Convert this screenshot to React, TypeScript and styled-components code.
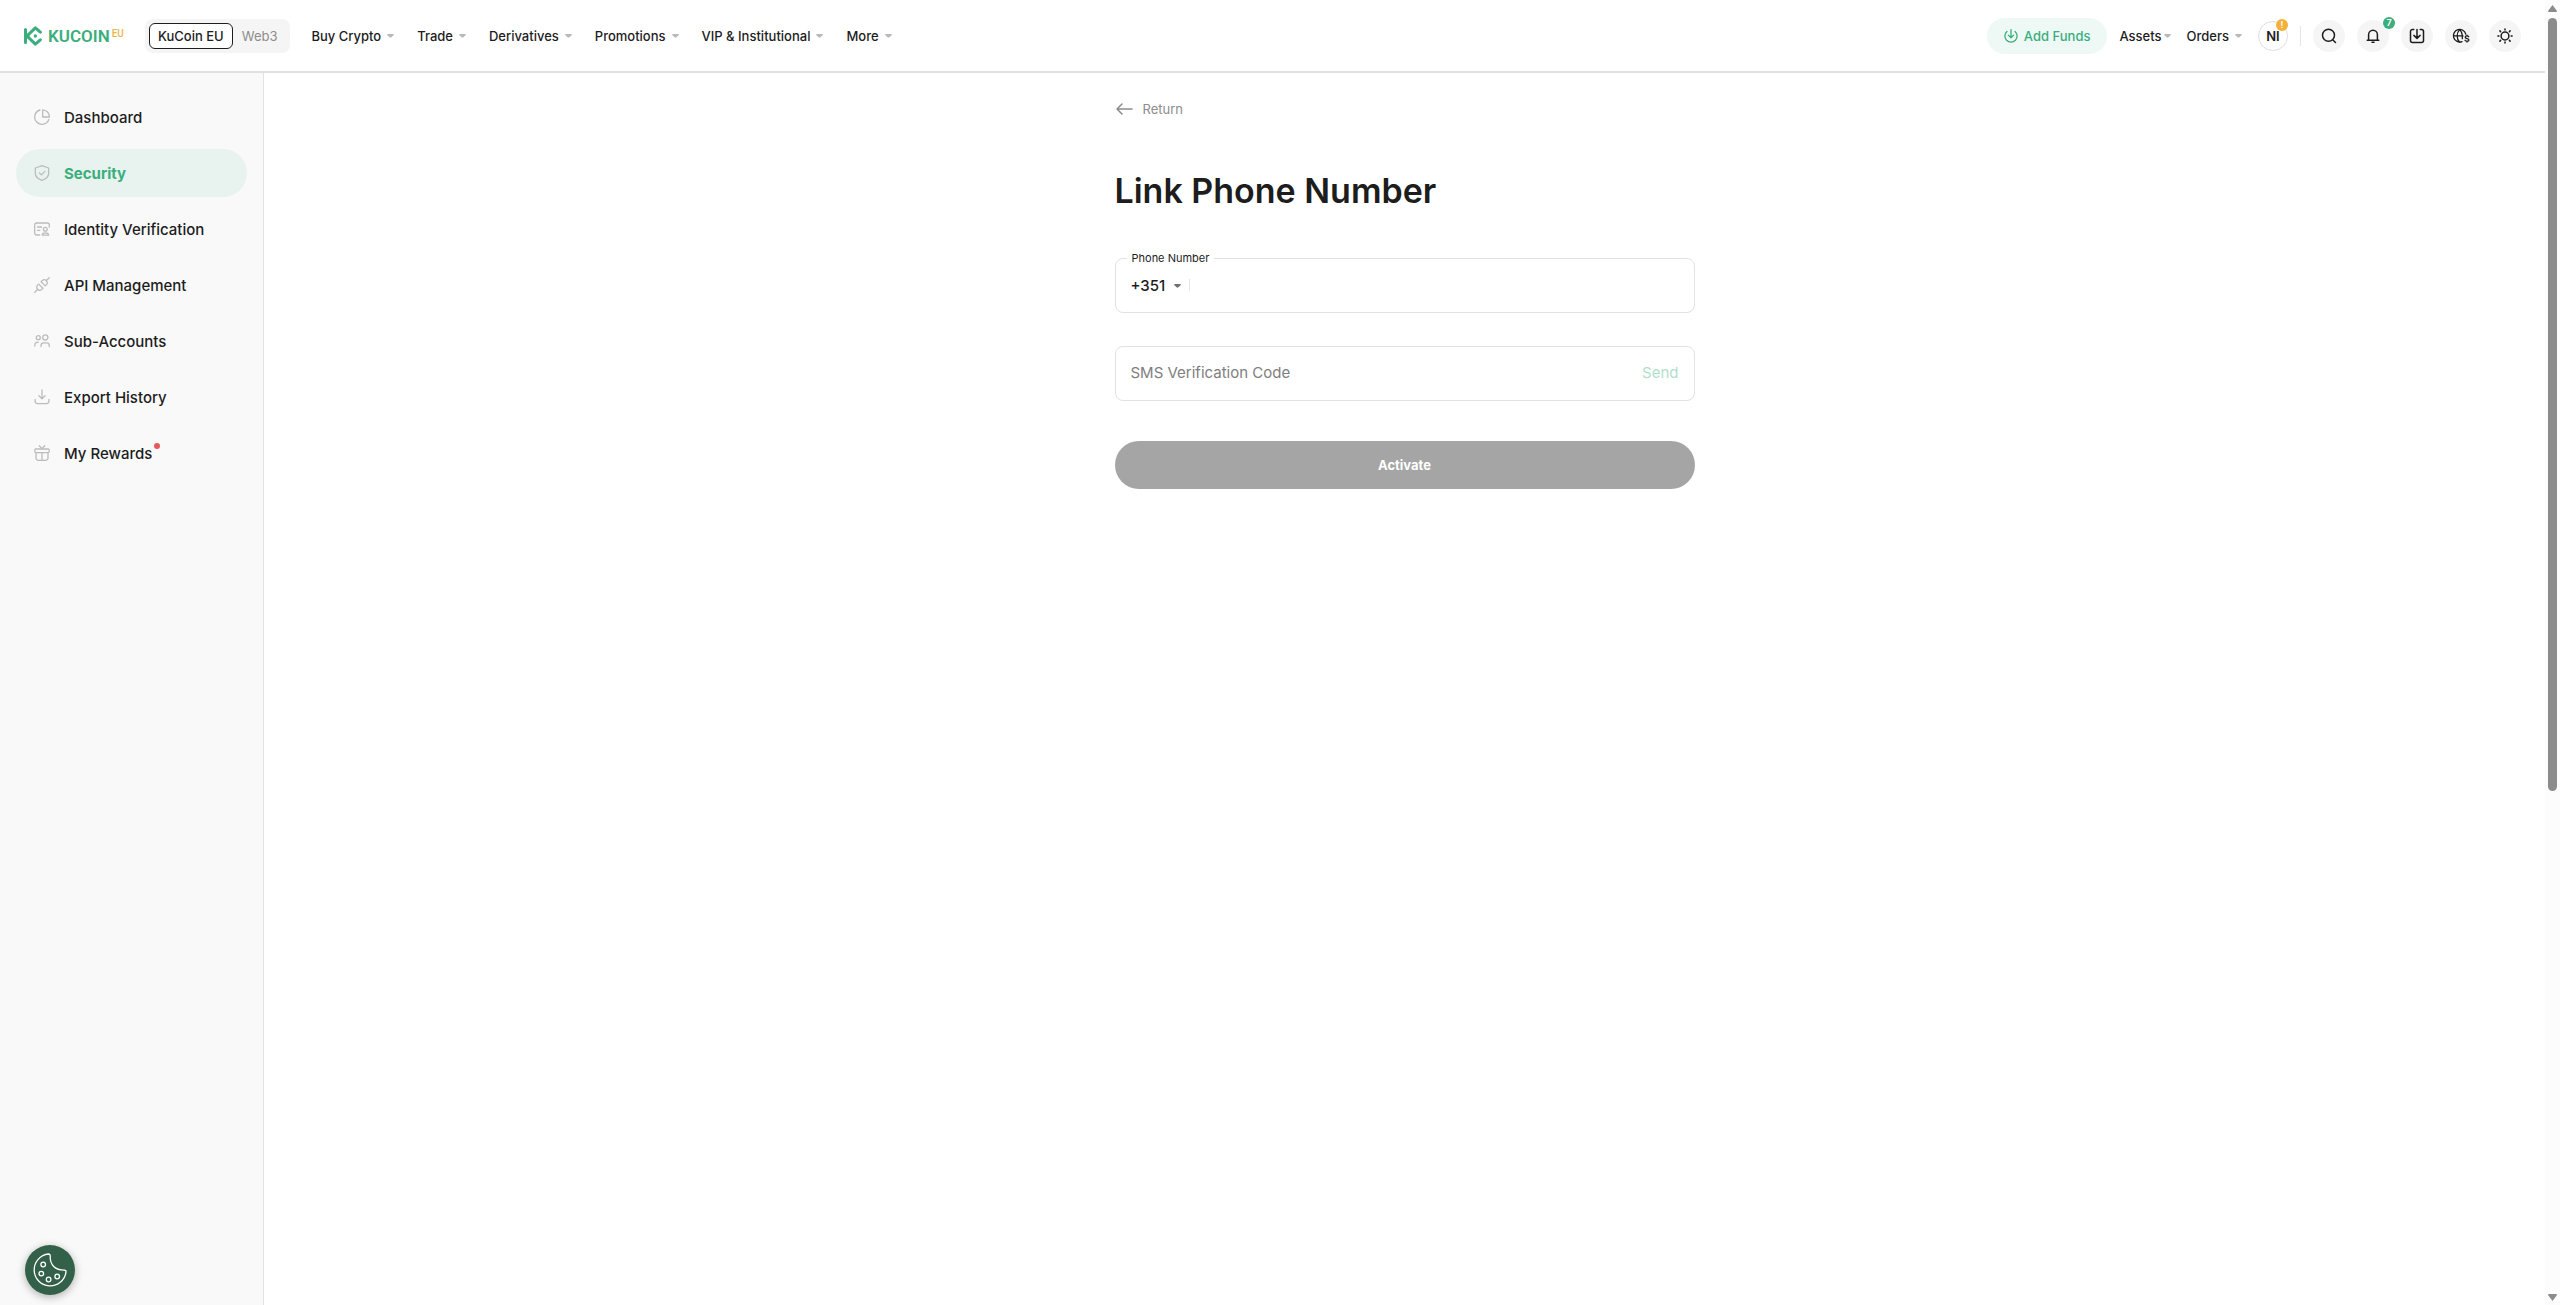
import React from 'react';
import styled, { createGlobalStyle } from 'styled-components';

const GlobalStyle = createGlobalStyle`
  *, *::before, *::after { box-sizing: border-box; }
  body {
    margin: 0;
    background: #fff;
    color: #1d1d1d;
    font-family: Inter, Roboto, sans-serif;
    font-size: 13px;
  }
  button, input, select { font: inherit; color: inherit; }
  button { cursor: pointer; white-space: nowrap; }
  a { color: inherit; text-decoration: none; }
`;

const Page = styled.div`
  display: grid;
  grid-template-columns: minmax(0, 1fr) 15px;
  min-height: 100vh;
`;

const Site = styled.div`
  display: flex;
  flex-direction: column;
`;

/* ---------- header ---------- */

const Header = styled.header`
  display: flex;
  align-items: center;
  height: 73px;
  padding: 0 24px;
  border-bottom: 2px solid #e0e0e0;
  background: #fff;
`;

const Logo = styled.a`
  display: flex;
  align-items: center;
  width: 121px;
  color: #3aae7d;
`;

const LogoName = styled.span`
  margin-left: 6px;
  font: 600 17px/20px Roboto, sans-serif;
`;

const LogoRegion = styled.span`
  align-self: flex-start;
  margin-left: 2px;
  font: 500 10px/16px Roboto, sans-serif;
  color: #ecb548;
`;

const Switcher = styled.div`
  display: flex;
  padding: 4px;
  border-radius: 8px;
  background: #f5f5f5;
`;

const SwitchOption = styled.button<{ $active?: boolean }>`
  height: 26px;
  padding: 0 8px;
  border: 1px solid ${p => (p.$active ? '#1d1d1d' : 'transparent')};
  border-radius: 6px;
  background: ${p => (p.$active ? '#fff' : 'transparent')};
  color: ${p => (p.$active ? '#1d1d1d' : '#8c8c8c')};
  font-weight: ${p => (p.$active ? 500 : 400)};
`;

const Nav = styled.nav`
  display: flex;
  gap: 23px;
  margin-left: 21px;
`;

const MenuButton = styled.button<{ $tight?: boolean }>`
  display: flex;
  align-items: center;
  gap: ${p => (p.$tight ? 2 : 6)}px;
  height: 36px;
  padding: 0;
  border: 0;
  background: none;
  font-weight: 500;
`;

const Actions = styled.div`
  display: flex;
  align-items: center;
  gap: 12px;
  margin-left: auto;
`;

const AddFunds = styled.button`
  display: flex;
  align-items: center;
  gap: 6px;
  height: 36px;
  padding: 0 17px;
  border: 0;
  border-radius: 18px;
  background: #eef9f5;
  color: #3aae7d;
  font-weight: 500;
`;

const AccountMenus = styled.div`
  display: flex;
  align-items: center;
  gap: 16px;
`;

const Avatar = styled.button`
  position: relative;
  width: 30px;
  height: 30px;
  padding: 0;
  border: 1px solid #dedede;
  border-radius: 50%;
  background: #fff;
  font-weight: 600;
`;

const Badge = styled.span<{ $color: string; $out: number }>`
  position: absolute;
  top: -3px;
  right: ${p => -p.$out}px;
  width: 12px;
  height: 12px;
  border-radius: 50%;
  background: ${p => p.$color};
  color: #fff;
  font-size: 9px;
  font-weight: 600;
  line-height: 12px;
  text-align: center;
`;

const Divider = styled.span<{ $height: number }>`
  width: 1px;
  height: ${p => p.$height}px;
  background: #e6e6e6;
`;

const RoundButton = styled.button`
  position: relative;
  display: grid;
  place-items: center;
  width: 32px;
  height: 32px;
  padding: 0;
  border: 0;
  border-radius: 50%;
  background: #f5f5f5;
`;

/* ---------- body ---------- */

const Body = styled.div`
  display: grid;
  grid-template-columns: 264px minmax(0, 1fr);
  flex: 1;
`;

const Sidebar = styled.aside`
  padding: 20px 16px;
  border-right: 1px solid #e2e2e2;
  background: #f9f9f9;
`;

const SideList = styled.ul`
  display: flex;
  flex-direction: column;
  gap: 8px;
  margin: 0;
  padding: 0;
  list-style: none;
`;

const SideLink = styled.a<{ $active?: boolean }>`
  display: flex;
  align-items: center;
  height: 48px;
  padding-left: 18px;
  border-radius: 24px;
  background: ${p => (p.$active ? '#e8f3ef' : 'transparent')};
  color: ${p => (p.$active ? '#3aae7d' : '#1d1d1d')};
  font-size: 15px;
  font-weight: ${p => (p.$active ? 700 : 500)};

  svg {
    margin-right: 14px;
    color: #bcbcbc;
  }
`;

const NewDot = styled.span`
  align-self: flex-start;
  width: 6px;
  height: 6px;
  margin: 14px 0 0 2px;
  border-radius: 50%;
  background: #e55b5b;
`;

const Main = styled.main`
  padding: 24px 24px 64px;
`;

const Form = styled.form`
  display: flex;
  flex-direction: column;
  max-width: 580px;
  margin: 0 auto;
`;

const Return = styled.a`
  display: flex;
  align-items: center;
  align-self: flex-start;
  gap: 10px;
  height: 24px;
  color: #8c8c8c;
`;

const Title = styled.h1`
  margin: 46px 0 35px;
  font-size: 34px;
  font-weight: 600;
  line-height: 48px;
`;

const PhoneField = styled.fieldset`
  min-width: 0;
  margin: 0;
  padding: 0 15px;
  border: 1px solid #e2e2e2;
  border-radius: 8px;
`;

const Legend = styled.legend`
  margin-left: -4px;
  padding: 0 5px;
  font-size: 11px;
  line-height: 16px;
`;

const PhoneRow = styled.div`
  display: flex;
  align-items: center;
  gap: 8px;
  height: 46px;
  padding-bottom: 8px;
`;

const CodeSelect = styled.select`
  padding: 0;
  border: 0;
  background: none;
  appearance: none;
  font-size: 15px;
  font-weight: 500;
`;

const TextInput = styled.input`
  flex: 1;
  min-width: 0;
  height: 32px;
  padding: 0;
  border: 0;
  outline: 0;
  background: none;
  font-size: 15px;

  &::placeholder { color: #7e7e7e; opacity: 1; }
`;

const CodeField = styled.div`
  display: flex;
  align-items: center;
  height: 55px;
  margin-top: 33px;
  padding: 0 15px 3px;
  border: 1px solid #e2e2e2;
  border-radius: 8px;
`;

const SendButton = styled.button`
  padding: 0;
  border: 0;
  background: none;
  color: #b0dfcb;
  font-size: 15px;
`;

const SubmitButton = styled.button`
  height: 48px;
  margin-top: 40px;
  border: 0;
  border-radius: 24px;
  background: #a5a5a5;
  color: #fff;
  font-weight: 700;
`;

const CookieButton = styled.button`
  position: fixed;
  bottom: 10px;
  left: 25px;
  display: grid;
  place-items: center;
  width: 50px;
  height: 50px;
  padding: 0;
  border: 0;
  border-radius: 50%;
  background: #336049;
  box-shadow: 0 2px 8px rgba(0, 0, 0, 0.3);
`;

/* ---------- scroll rail ---------- */

const Rail = styled.div`
  position: sticky;
  top: 0;
  display: flex;
  flex-direction: column;
  align-items: center;
  height: 100vh;
  padding: 5px 0 4px;
  background: #fcfcfc;
`;

const RailTrack = styled.div`
  flex: 1;
  width: 9px;
  margin: 6px 0 9px;
`;

const RailThumb = styled.div`
  height: 61%;
  border-radius: 5px;
  background: #8b8b8b;
`;

/* ---------- icons ---------- */

type IconProps = { size?: number; box?: number; width?: number; children: React.ReactNode };

const Icon = ({ size = 16, box = 16, width = 1.3, children }: IconProps) => (
  <svg width={size} height={size} viewBox={`0 0 ${box} ${box}`} fill="none" stroke="currentColor"
    strokeWidth={width} strokeLinecap="round" strokeLinejoin="round" aria-hidden="true">
    {children}
  </svg>
);

const Caret = ({ color = '#b9b9b9' }: { color?: string }) => (
  <svg width="7" height="7" viewBox="0 0 7 7" aria-hidden="true">
    <path d="M.9 2h5.200q1.200.2.500 1.200L4.400 5.300q-.9.900-1.800 0L.4 3.200Q-.3 2.200.9 2z" fill={color} />
  </svg>
);

const LogoMark = () => (
  <svg width="18" height="20" viewBox="0 0 54 60" fill="none" stroke="currentColor" strokeWidth="9"
    strokeLinecap="round" strokeLinejoin="round" aria-hidden="true">
    <path d="M4.500 10.500V49.500M49 18.500L34 5.500L9 30L34 54.500L49 41.500" />
    <path d="M6 23L14 30L6 37" strokeWidth="6" />
    <circle cx="34" cy="30" r="5" fill="currentColor" stroke="none" />
  </svg>
);

const sideItems = [
  { label: 'Dashboard', icon: <><path d="M6 1A7.300 7.300 0 1 0 14.900 10.400" /><path d="M8.700.8v7.200h6.700A7 7 0 0 0 8.700.8z" /></> },
  { label: 'Security', active: true, icon: <><path d="M8 .7L14.700 3v5.200c0 3.300-2.600 5.700-6.700 7.200-4.100-1.500-6.700-3.900-6.700-7.200V3z" /><path d="M5.400 8l2 1.900 3.500-3.500" /></> },
  { label: 'Identity Verification', icon: <><path d="M5.600 14H2.600A1.900 1.900 0 0 1 .700 12.100V3.900A1.900 1.900 0 0 1 2.600 2h10.800a1.900 1.900 0 0 1 1.900 1.900v2.300" /><path d="M3.600 6h4M3.600 9.300h2.200" /><circle cx="11.300" cy="8.300" r="1.900" /><path d="M8.200 14.200c0-3.200 6.400-3.200 6.400 0z" /></> },
  { label: 'API Management', icon: <><path d="M.8 15.200l2.500-2.500M12.700 3.300L15.200.8M4.700 7.100l4.200 4.200-1.300 1.300a3 3 0 0 1-4.200-4.200zM7.100 4.700l4.200 4.200 1.300-1.300a3 3 0 0 0-4.200-4.200z" /></> },
  { label: 'Sub-Accounts', icon: <><circle cx="4.300" cy="4.700" r="2" /><circle cx="11.300" cy="4.400" r="2.600" /><path d="M.8 13v-.6c0-1.900 1.200-3.100 3.400-3.200M7 13.600v-.9c0-1.700 1.200-2.800 2.800-2.800h2.700c1.600 0 2.800 1.100 2.800 2.800v.9" /></> },
  { label: 'Export History', icon: <path d="M8 1v8.400M4.900 6.700L8 9.700l3.100-3M1.100 10.500v1.600a2.500 2.500 0 0 0 2.500 2.500h8.800a2.500 2.500 0 0 0 2.500-2.500v-1.600" /> },
  { label: 'My Rewards', isNew: true, icon: <><rect x=".8" y="4" width="14.400" height="3.600" rx="1" /><path d="M2 7.600V13a2.300 2.300 0 0 0 2.300 2.300h7.400A2.300 2.300 0 0 0 14 13V7.600M8 7.600v7.700M5.300.8L8 3.600 10.700.8" /></> },
];

const navItems = ['Buy Crypto', 'Trade', 'Derivatives', 'Promotions', 'VIP & Institutional', 'More'];

export default function App() {
  return (
    <Page>
      <GlobalStyle />
      <Site>
        <Header>
          <Logo href="#">
            <LogoMark />
            <LogoName>KUCOIN</LogoName>
            <LogoRegion>EU</LogoRegion>
          </Logo>
          <Switcher>
            <SwitchOption $active>KuCoin EU</SwitchOption>
            <SwitchOption>Web3</SwitchOption>
          </Switcher>
          <Nav>
            {navItems.map(item => (
              <MenuButton key={item}>{item}<Caret /></MenuButton>
            ))}
          </Nav>
          <Actions>
            <AddFunds>
              <Icon size={14} width={1.5}>
                <path d="M8 .8v9M4.900 7l3.100 3 3.100-3M3.400 2.800a7 7 0 1 0 9.200 0" />
              </Icon>
              Add Funds
            </AddFunds>
            <AccountMenus>
              <MenuButton $tight>Assets<Caret /></MenuButton>
              <MenuButton>Orders<Caret /></MenuButton>
              <Avatar aria-label="Account NI">NI<Badge $color="#f3b03a" $out={1}>!</Badge></Avatar>
            </AccountMenus>
            <Divider $height={20} />
            <RoundButton aria-label="Search">
              <Icon width={1.5}><circle cx="7.500" cy="7.300" r="6" /><path d="M12 12l2.500 2.500" /></Icon>
            </RoundButton>
            <RoundButton aria-label="Notifications">
              <Icon width={1.5}>
                <path d="M2.200 12.300h11.600M3.600 12.300V6.600a4.400 4.400 0 0 1 8.800 0v5.700M7 14.300h2" />
              </Icon>
              <Badge $color="#3aae7d" $out={6}>7</Badge>
            </RoundButton>
            <RoundButton aria-label="Download">
              <Icon width={1.5}>
                <path d="M4.800 1.500H3.500a2 2 0 0 0-2 2v9a2 2 0 0 0 2 2h9a2 2 0 0 0 2-2v-9a2 2 0 0 0-2-2h-1.300M8 1.500v8.700M4.900 7.400L8 10.400l3.100-3" />
              </Icon>
            </RoundButton>
            <RoundButton aria-label="Language and currency">
              <Icon size={18} box={18} width={1.300}>
                <path d="M10 14.600A6.300 6.300 0 1 1 13.800 7.200M1.400 8.900h9.600M7.700 2.600C4.300 6 4.300 11.800 7.700 15.200M7.700 2.600c1.600 1.600 2.500 3.500 2.600 5.600v3.500" />
                <path d="M16.700 9.700c-.7-1.200-3.500-1.100-3.500.5 0 1.700 3.700 1 3.700 2.700 0 1.700-3.100 1.700-3.900.3M15 8.200v.7M15 14.200v.8" />
              </Icon>
            </RoundButton>
            <RoundButton aria-label="Light theme">
              <Icon width={1.500}>
                <circle cx="8" cy="8" r="3.900" />
                <path d="M8 .9v1M8 14.100v1M.9 8h1M14.100 8h1M2.900 2.900l.7.7M12.400 12.400l.7.7M2.900 13.100l.7-.7M12.400 3.600l.7-.7" />
              </Icon>
            </RoundButton>
          </Actions>
        </Header>
        <Body>
          <Sidebar>
            <SideList>
              {sideItems.map(item => (
                <li key={item.label}>
                  <SideLink href="#" $active={item.active}>
                    <Icon>{item.icon}</Icon>
                    {item.label}
                    {item.isNew && <NewDot />}
                  </SideLink>
                </li>
              ))}
            </SideList>
          </Sidebar>
          <Main>
            <Form onSubmit={e => e.preventDefault()}>
              <Return href="#">
                <svg width="18" height="12" viewBox="0 0 18 12" fill="none" stroke="currentColor"
                  strokeWidth="1.500" strokeLinecap="round" strokeLinejoin="round" aria-hidden="true">
                  <path d="M17 6H2M7 1L2 6l5 5" />
                </svg>
                Return
              </Return>
              <Title>Link Phone Number</Title>
              <PhoneField>
                <Legend><label htmlFor="phone">Phone Number</label></Legend>
                <PhoneRow>
                  <CodeSelect aria-label="Country code" defaultValue="351">
                    <option value="351">+351</option>
                  </CodeSelect>
                  <Caret color="#6f6f6f" />
                  <Divider $height={12} />
                  <TextInput id="phone" type="tel" />
                </PhoneRow>
              </PhoneField>
              <CodeField>
                <TextInput aria-label="SMS Verification Code" placeholder="SMS Verification Code" />
                <SendButton type="button">Send</SendButton>
              </CodeField>
              <SubmitButton type="submit">Activate</SubmitButton>
            </Form>
          </Main>
        </Body>
      </Site>
      <Rail aria-hidden="true">
        <svg width="9" height="7" viewBox="0 0 9 7"><path d="M4.500 0L9 6q0 1-1 1H1Q0 7 0 6z" fill="#8b8b8b" /></svg>
        <RailTrack><RailThumb /></RailTrack>
        <svg width="9" height="7" viewBox="0 0 9 7"><path d="M4.500 7L9 1q0-1-1-1H1Q0 0 0 1z" fill="#8b8b8b" /></svg>
      </Rail>
      <CookieButton aria-label="Cookie settings">
        <svg width="34" height="34" viewBox="0 0 34 34" fill="none" stroke="#fff" strokeWidth="1.300" strokeLinejoin="round" aria-hidden="true">
          <path d="M15.500 1A16 16 0 1 0 33 19.200c.3-1.200-.4-2-1.600-2.100-9.100.1-14.600-5.100-14.200-14.200 0-1.200-.6-1.900-1.700-1.900z" />
          <circle cx="10.200" cy="11.500" r="2.300" />
          <circle cx="8.300" cy="20.600" r="2.300" />
          <circle cx="15.600" cy="26.500" r="2.300" />
          <circle cx="24.200" cy="23.500" r="2.300" />
        </svg>
      </CookieButton>
    </Page>
  );
}
